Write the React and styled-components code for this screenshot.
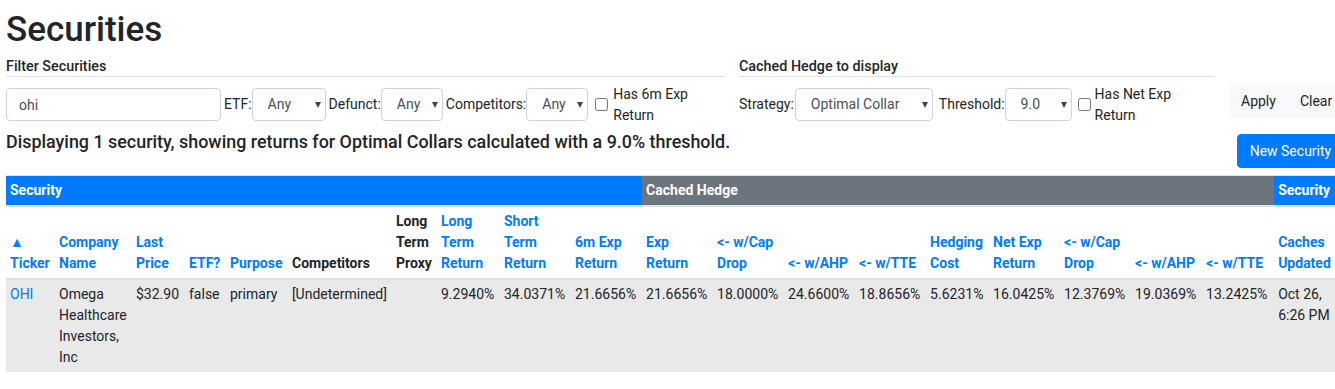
import React from "react";
import styled, { createGlobalStyle } from "styled-components";

const Global = createGlobalStyle`
  html, body { margin: 0; overflow: hidden; background: #fff; }
  body {
    font-family: Roboto, "Helvetica Neue", Arial, sans-serif;
    font-size: 14px;
    line-height: 1.5;
    color: #212529;
  }
  * { box-sizing: border-box; }
`;

const Page = styled.div`
  padding: 6px 0 0 6px;
  width: 1360px;
`;

const Title = styled.h1`
  margin: 0 0 5px;
  font-size: 35px;
  font-weight: 500;
  line-height: 48px;
`;

const TopArea = styled.div`
  display: flex;
  gap: 14px;
  align-items: flex-start;
`;

const LeftColumn = styled.div`
  width: 1209px;
  flex: none;
  display: flex;
  flex-direction: column;
`;

const FieldsetRow = styled.div`
  display: flex;
  gap: 14px;
`;

const Fieldset = styled.div`
  width: ${(p) => p.$width}px;
`;

const Legend = styled.div`
  font-size: 14.35px;
  font-weight: 500;
  line-height: 1.17;
  border-bottom: 1px solid #dee2e6;
  margin-bottom: 7px;
`;

const Controls = styled.div`
  display: flex;
  align-items: center;
  height: 42px;
`;

const TextInput = styled.input`
  width: 215px;
  height: 33px;
  padding: 5px 12px;
  font: inherit;
  color: #495057;
  border: 1px solid #ced4da;
  border-radius: 4px;
  outline: none;
`;

const FieldLabel = styled.label`
  margin-left: ${(p) => p.$gap ?? 3}px;
  margin-right: ${(p) => p.$after ?? 1}px;
  white-space: nowrap;
`;

const SelectWrap = styled.div`
  position: relative;
  width: ${(p) => p.$width}px;
  height: 33px;
  &::after {
    content: "";
    position: absolute;
    right: 5px;
    top: 14px;
    border-left: 3.5px solid transparent;
    border-right: 3.5px solid transparent;
    border-top: 6px solid #444;
    pointer-events: none;
  }
`;

const Select = styled.select`
  appearance: none;
  width: 100%;
  height: 100%;
  padding: 5px 14px 5px 15px;
  font: inherit;
  color: #495057;
  background: #fff;
  border: 1px solid #ced4da;
  border-radius: 4px;
  outline: none;
`;

const Check = styled.input`
  width: 13px;
  height: 13px;
  margin: 0 0 0 ${(p) => p.$gap ?? 8}px;
  flex: none;
`;

const CheckLabel = styled.label`
  margin-left: ${(p) => p.$gap ?? 5}px;
  width: ${(p) => p.$width}px;
  line-height: 21px;
`;

const Summary = styled.div`
  margin-top: 5px;
  font-size: 17.9px;
  font-weight: 500;
  line-height: 1.2;
`;

const RightColumn = styled.div`
  flex: none;
  padding-top: 25px;
  display: flex;
  flex-direction: column;
  align-items: flex-end;
  gap: 16px;
`;

const ButtonGroup = styled.div`
  display: flex;
`;

const Button = styled.button`
  height: 34px;
  padding: 6px ${(p) => (p.$primary ? 12 : 11)}px;
  font: inherit;
  line-height: 1.5;
  border-radius: ${(p) => p.$radius || "4px"};
  border: 1px solid ${(p) => (p.$primary ? "#007bff" : "#f8f9fa")};
  background: ${(p) => (p.$primary ? "#007bff" : "#f8f9fa")};
  color: ${(p) => (p.$primary ? "#fff" : "#212529")};
  white-space: nowrap;
  cursor: pointer;
`;

const Table = styled.table`
  margin-top: 7px;
  width: 1330px;
  table-layout: fixed;
  border-collapse: collapse;
`;

const Col = styled.col`
  width: ${(p) => p.$w}px;
`;

const GroupTh = styled.th`
  background: ${(p) => (p.$gray ? "#6c757d" : "#007bff")};
  color: #fff;
  font-weight: 700;
  text-align: left;
  padding: 4px;
  line-height: 21px;
  border-top: 1px solid #dee2e6;
  border-bottom: 2px solid #dee2e6;
  white-space: nowrap;
  overflow: hidden;
`;

const ColTh = styled.th`
  padding: 4px;
  text-align: left;
  vertical-align: bottom;
  font-weight: 700;
  line-height: 21px;
  color: ${(p) => (p.$plain ? "#212529" : "#007bff")};
  border-bottom: 2px solid #dee2e6;
`;

const BodyRow = styled.tr`
  background: #e9e9e9;
`;

const Td = styled.td`
  padding: 4px;
  vertical-align: top;
  line-height: 21px;
  color: ${(p) => (p.$link ? "#007bff" : "#212529")};
  border-top: 1px solid #dee2e6;
`;

const columns = [
  { label: "▲ Ticker", w: 49 },
  { label: "Company Name", w: 77 },
  { label: "Last Price", w: 53 },
  { label: "ETF?", w: 41 },
  { label: "Purpose", w: 62 },
  { label: "Competitors", w: 104, plain: true },
  { label: "Long Term Proxy", w: 45, plain: true },
  { label: "Long Term Return", w: 63 },
  { label: "Short Term Return", w: 71 },
  { label: "6m Exp Return", w: 71 },
  { label: "Exp Return", w: 71 },
  { label: "<- w/Cap Drop", w: 71 },
  { label: "<- w/AHP", w: 71 },
  { label: "<- w/TTE", w: 71 },
  { label: "Hedging Cost", w: 63 },
  { label: "Net Exp Return", w: 71 },
  { label: "<- w/Cap Drop", w: 71 },
  { label: "<- w/AHP", w: 71 },
  { label: "<- w/TTE", w: 72 },
  { label: "Caches Updated", w: 62 },
];

const row = [
  { v: "OHI", link: true },
  { v: "Omega Healthcare Investors, Inc" },
  { v: "$32.90" },
  { v: "false" },
  { v: "primary" },
  { v: "[Undetermined]" },
  { v: "" },
  { v: "9.2940%" },
  { v: "34.0371%" },
  { v: "21.6656%" },
  { v: "21.6656%" },
  { v: "18.0000%" },
  { v: "24.6600%" },
  { v: "18.8656%" },
  { v: "5.6231%" },
  { v: "16.0425%" },
  { v: "12.3769%" },
  { v: "19.0369%" },
  { v: "13.2425%" },
  { v: "Oct 26, 6:26 PM" },
];

function LabeledSelect({ label, width, value, options, gap, after }) {
  return (
    <>
      <FieldLabel $gap={gap} $after={after}>{label}</FieldLabel>
      <SelectWrap $width={width}>
        <Select defaultValue={value}>
          {options.map((o) => (
            <option key={o}>{o}</option>
          ))}
        </Select>
      </SelectWrap>
    </>
  );
}

export default function App() {
  return (
    <Page>
      <Global />
      <Title>Securities</Title>
      <TopArea>
        <LeftColumn>
          <FieldsetRow>
            <Fieldset $width={719}>
              <Legend>Filter Securities</Legend>
              <Controls>
                <TextInput defaultValue="ohi" />
                <LabeledSelect label="ETF:" width={74} value="Any" options={["Any", "Yes", "No"]} after={0} />
                <LabeledSelect label="Defunct:" width={62} value="Any" options={["Any", "Yes", "No"]} after={0} />
                <LabeledSelect label="Competitors:" width={62} value="Any" options={["Any", "Yes", "No"]} after={0} />
                <Check type="checkbox" $gap={7} />
                <CheckLabel $width={106} $gap={5}>Has 6m Exp Return</CheckLabel>
              </Controls>
            </Fieldset>
            <Fieldset $width={476}>
              <Legend>Cached Hedge to display</Legend>
              <Controls>
                <FieldLabel $gap={0} $after={1}>Strategy:</FieldLabel>
                <SelectWrap $width={138}>
                  <Select defaultValue="Optimal Collar">
                    <option>Optimal Collar</option>
                    <option>Put</option>
                  </Select>
                </SelectWrap>
                <LabeledSelect label="Threshold:" width={67} value="9.0" options={["9.0", "5.0", "15.0"]} gap={6} after={0} />
                <Check type="checkbox" $gap={6} />
                <CheckLabel $width={115} $gap={4}>Has Net Exp Return</CheckLabel>
              </Controls>
            </Fieldset>
          </FieldsetRow>
          <Summary>
            Displaying 1 security, showing returns for Optimal Collars calculated with a 9.0% threshold.
          </Summary>
        </LeftColumn>
        <RightColumn>
          <ButtonGroup>
            <Button $radius="4px 0 0 4px">Apply</Button>
            <Button $radius="0 4px 4px 0">Clear</Button>
          </ButtonGroup>
          <Button $primary>New Security</Button>
        </RightColumn>
      </TopArea>
      <Table>
        <colgroup>
          {columns.map((c, i) => (
            <Col key={i} $w={c.w} />
          ))}
        </colgroup>
        <thead>
          <tr>
            <GroupTh colSpan={10}>Security</GroupTh>
            <GroupTh colSpan={9} $gray>Cached Hedge</GroupTh>
            <GroupTh>Security</GroupTh>
          </tr>
          <tr>
            {columns.map((c, i) => (
              <ColTh key={i} $plain={c.plain}>
                {c.label}
              </ColTh>
            ))}
          </tr>
        </thead>
        <tbody>
          <BodyRow>
            {row.map((c, i) => (
              <Td key={i} $link={c.link}>
                {c.v}
              </Td>
            ))}
          </BodyRow>
        </tbody>
      </Table>
    </Page>
  );
}
